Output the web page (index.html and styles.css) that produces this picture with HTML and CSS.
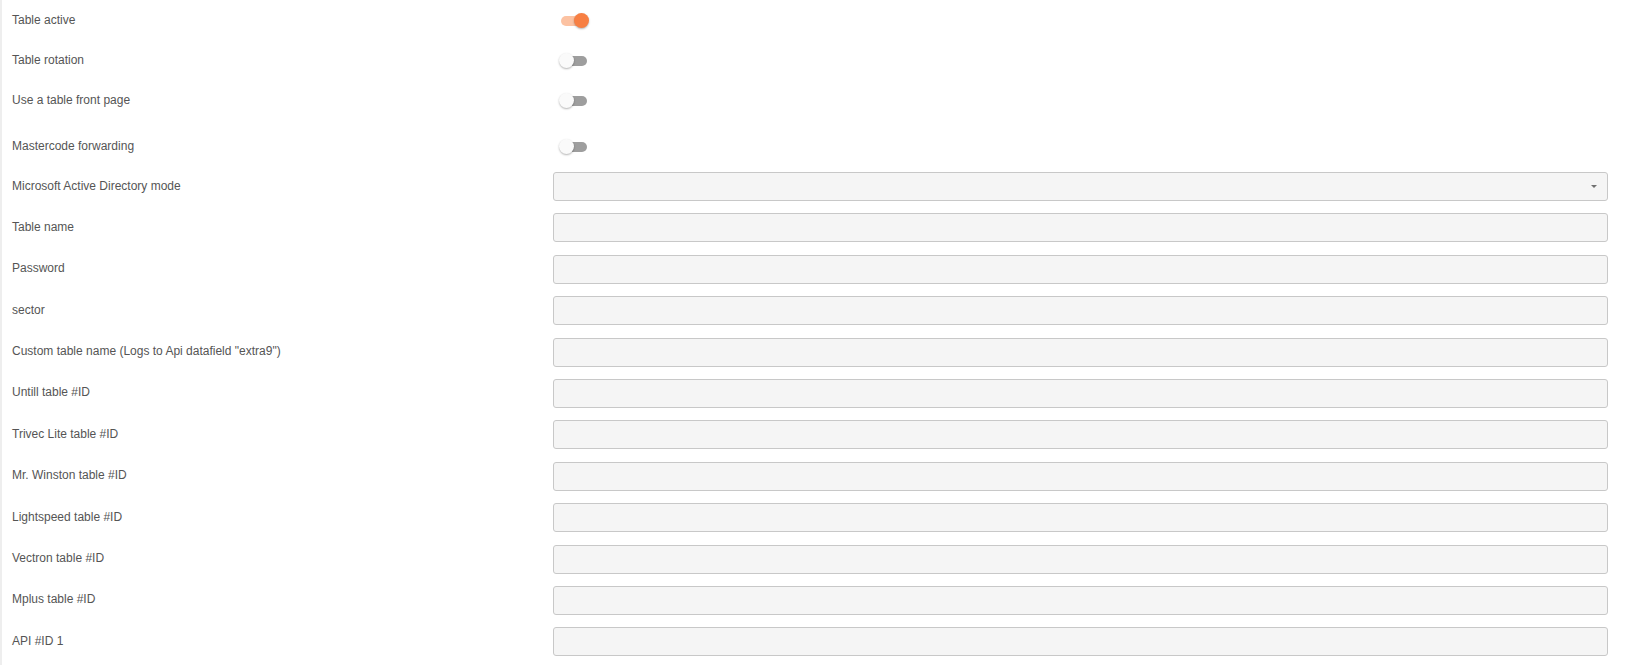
FILE: index.html
```html
<!DOCTYPE html>
<html lang="en">
<head>
    <meta charset="UTF-8">
    <meta name="viewport" content="width=device-width, initial-scale=1.0">
    <title>Table settings</title>
    <link rel="stylesheet" href="styles.css">
</head>
<body>
    <div class="settings">
        <div class="toggles">
            <div class="row">
                <span class="label">Table active</span>
                <label class="toggle">
                    <input type="checkbox" checked>
                    <span class="track"></span>
                </label>
            </div>
            <div class="row">
                <span class="label">Table rotation</span>
                <label class="toggle">
                    <input type="checkbox">
                    <span class="track"></span>
                </label>
            </div>
            <div class="row">
                <span class="label">Use a table front page</span>
                <label class="toggle">
                    <input type="checkbox">
                    <span class="track"></span>
                </label>
            </div>
            <div class="row row-spaced">
                <span class="label">Mastercode forwarding</span>
                <label class="toggle">
                    <input type="checkbox">
                    <span class="track"></span>
                </label>
            </div>
        </div>

        <div class="fields">
            <div class="row">
                <span class="label">Microsoft Active Directory mode</span>
                <div class="select-box">
                    <select class="field">
                        <option></option>
                    </select>
                    <span class="arrow"></span>
                </div>
            </div>
            <div class="row">
                <span class="label">Table name</span>
                <input type="text" class="field">
            </div>
            <div class="row">
                <span class="label">Password</span>
                <input type="password" class="field">
            </div>
            <div class="row">
                <span class="label">sector</span>
                <input type="text" class="field">
            </div>
            <div class="row">
                <span class="label">Custom table name (Logs to Api datafield "extra9")</span>
                <input type="text" class="field">
            </div>
            <div class="row">
                <span class="label">Untill table #ID</span>
                <input type="text" class="field">
            </div>
            <div class="row">
                <span class="label">Trivec Lite table #ID</span>
                <input type="text" class="field">
            </div>
            <div class="row">
                <span class="label">Mr. Winston table #ID</span>
                <input type="text" class="field">
            </div>
            <div class="row">
                <span class="label">Lightspeed table #ID</span>
                <input type="text" class="field">
            </div>
            <div class="row">
                <span class="label">Vectron table #ID</span>
                <input type="text" class="field">
            </div>
            <div class="row">
                <span class="label">Mplus table #ID</span>
                <input type="text" class="field">
            </div>
            <div class="row">
                <span class="label">API #ID 1</span>
                <input type="text" class="field">
            </div>
        </div>
    </div>
</body>
</html>
```

FILE: styles.css
```css
html, body {
    height: 100%;
}
body {
    font-family: "Liberation Sans", Arial, sans-serif;
    font-size: 12px;
    color: #555;
    margin: 0;
    padding: 0;
    background-color: white;
    overflow: hidden;
}
.settings {
    min-height: 100%;
    border-left: 2px solid #eeeeee;
    padding: 0 34px 0 10px;
    box-sizing: border-box;
}
.row {
    display: grid;
    grid-template-columns: 541px 1fr;
    align-items: center;
}
.label {
    line-height: 14px;
}
.toggles .row {
    height: 40px;
}
.toggles .row-spaced {
    margin-top: 6px;
}
.toggle {
    position: relative;
    display: inline-block;
    width: 30px;
    height: 15px;
    margin-left: 6px;
    cursor: pointer;
}
.toggle input {
    opacity: 0;
    width: 0;
    height: 0;
    position: absolute;
}
.track {
    position: absolute;
    left: 2px;
    top: 3px;
    width: 26px;
    height: 10px;
    border-radius: 5px;
    background-color: #9e9e9e;
}
.track:before {
    content: "";
    position: absolute;
    left: -2px;
    top: -3px;
    width: 15px;
    height: 15px;
    border-radius: 50%;
    background-color: #fafafa;
    box-shadow: 0 1px 2px rgba(0,0,0,0.3);
    transition: .2s;
}
input:checked + .track {
    background-color: #fcc2a2;
}
input:checked + .track:before {
    background-color: #f77f43;
    transform: translateX(15px);
}
.fields {
    display: flex;
    flex-direction: column;
    gap: 12.4px;
    padding-top: 6px;
}
.fields .label {
    margin-bottom: 2px;
}
.field {
    display: block;
    width: 100%;
    height: 29px;
    margin: 0;
    box-sizing: border-box;
    border: 1px solid #c8c8c8;
    border-radius: 3px;
    background-color: #f5f5f5;
    font-family: inherit;
    font-size: 12px;
    color: #555;
    padding: 0 10px;
    outline: none;
}
select.field {
    appearance: none;
    -webkit-appearance: none;
}
.select-box {
    position: relative;
}
.arrow {
    position: absolute;
    right: 11px;
    top: 13px;
    border-left: 3px solid transparent;
    border-right: 3px solid transparent;
    border-top: 3px solid #707070;
    pointer-events: none;
}
```
